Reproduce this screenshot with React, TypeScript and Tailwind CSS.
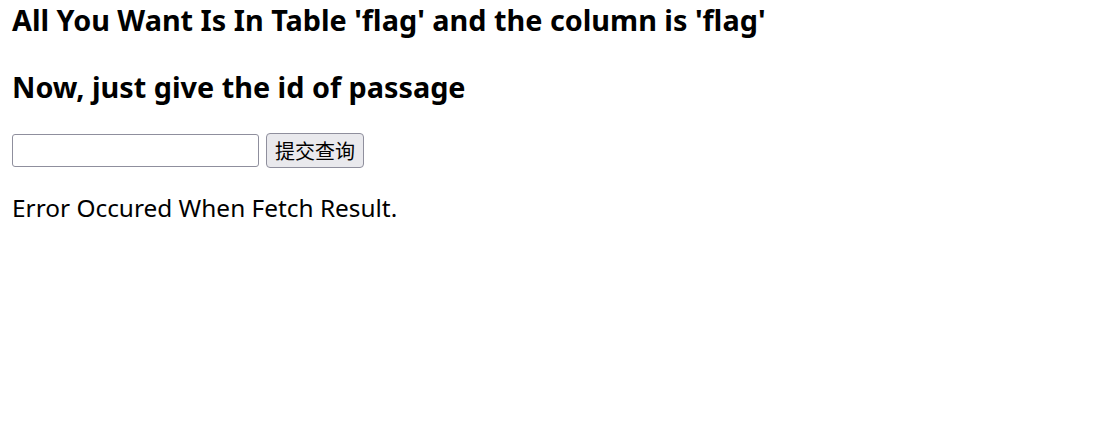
export default function App() {
  return (
    <div className="min-h-[435px] bg-white px-3 pt-[2px] text-black font-['Noto_Sans','Noto_Sans_CJK_SC',sans-serif]">
      <h3 className="text-[28.8px] font-bold leading-[36px]">
        All You Want Is In Table 'flag' and the column is 'flag'
      </h3>
      <h3 className="mt-[31px] text-[28.8px] font-bold leading-[36px]">Now, just give the id of passage</h3>
      <form className="mt-[28px] flex items-center gap-[7px]" onSubmit={(e) => e.preventDefault()}>
        <input
          type="text"
          className="h-[33px] w-[247px] rounded-[3px] border border-[#8f8f9d] bg-white px-1 text-[20px]"
        />
        <button
          type="submit"
          className="h-[35px] w-[98px] rounded-[4px] border border-[#8f8f9d] bg-[#e9e9ed] text-[20px] font-['Noto_Sans_CJK_SC',sans-serif]"
        >
          提交查询
        </button>
      </form>
      <p className="mt-[25px] text-[24.4px] leading-[30px]">Error Occured When Fetch Result.</p>
    </div>
  );
}
